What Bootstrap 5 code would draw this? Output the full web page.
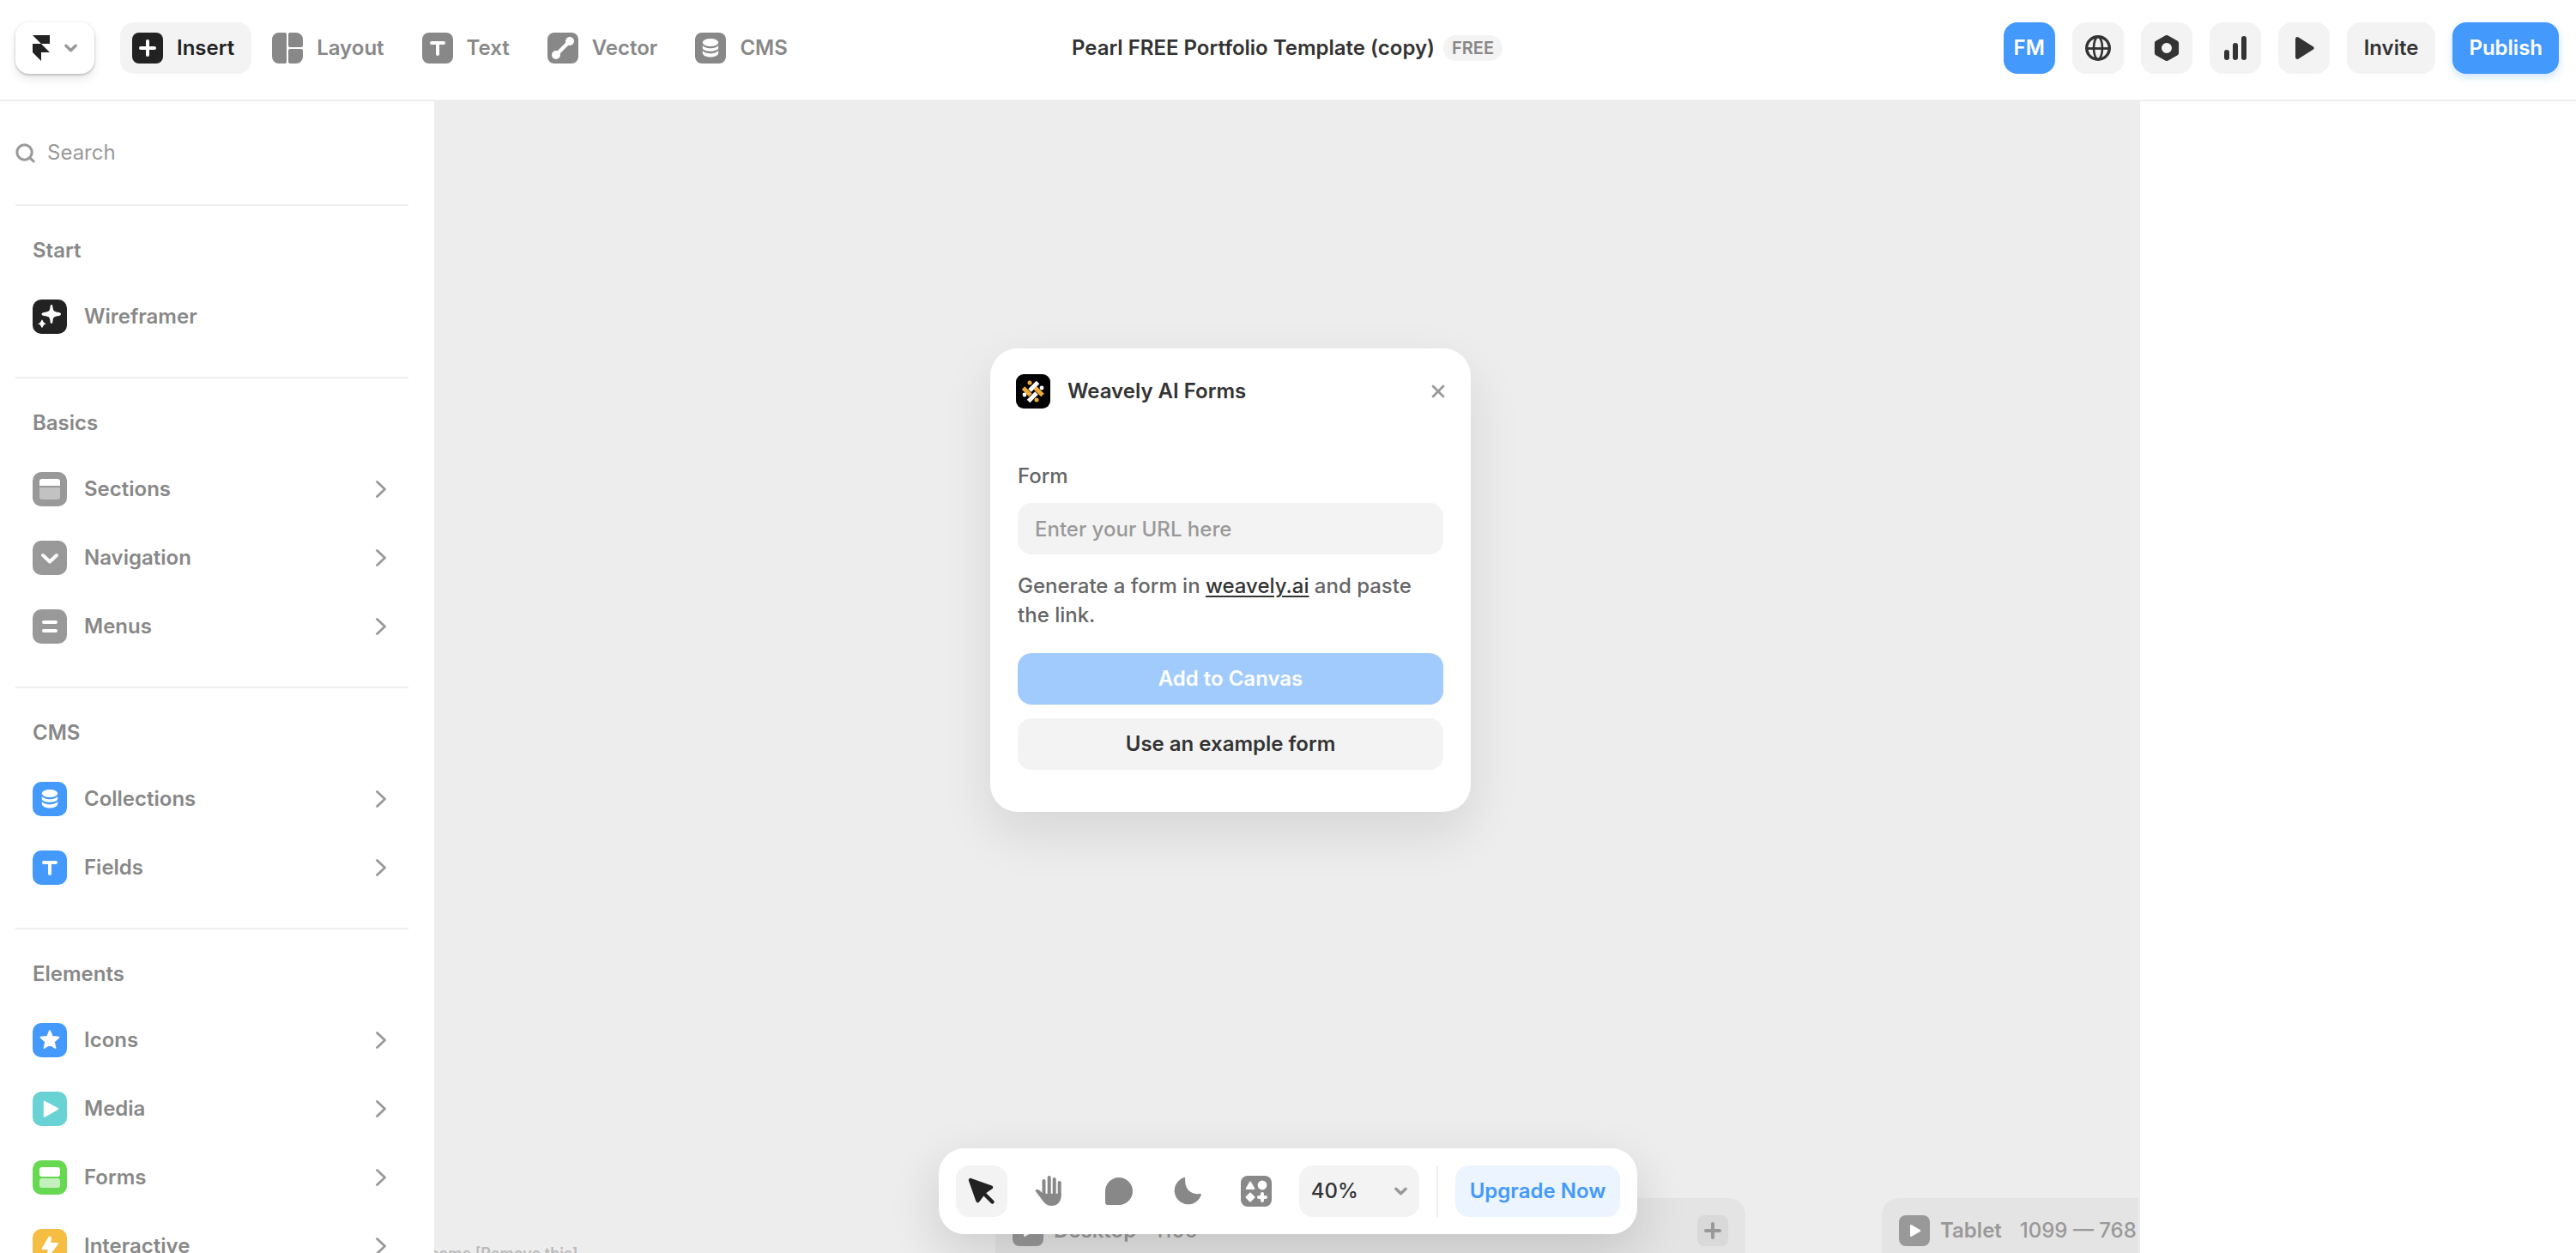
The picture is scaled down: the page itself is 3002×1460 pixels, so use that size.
<!DOCTYPE html>
<html lang="en">
<head>
<meta charset="utf-8">
<meta name="viewport" content="width=device-width, initial-scale=1">
<title>Pearl FREE Portfolio Template (copy)</title>
<link rel="stylesheet" href="https://cdn.jsdelivr.net/npm/bootstrap@5.3.0/dist/css/bootstrap.min.css">
<style>
  :root { --ink:#222; --text:#333; --mute:#888; --soft:#999; --line:#eee; --fill:#f3f3f3; --blue:#4499fc; }
  body { font-family: Inter, "Liberation Sans", sans-serif; font-size: 24px; line-height: 30px; font-weight: 500; color: var(--text); background: #fff; }
  svg { display: block; flex: none; }
  .btn { --bs-btn-font-size: 24px; --bs-btn-line-height: 30px; --bs-btn-font-weight: 600; --bs-btn-border-width: 0; --bs-btn-border-radius: 16px; --bs-btn-padding-x: 20px; --bs-btn-padding-y: 0px; --bs-btn-disabled-opacity: 1; height: 60px; }
  .btn-fill { --bs-btn-bg: var(--fill); --bs-btn-color: var(--text); --bs-btn-hover-bg: #eaeaea; }
  .btn-blue { --bs-btn-bg: var(--blue); --bs-btn-color: #fff; --bs-btn-hover-bg: #3388ee; --bs-btn-hover-color: #fff; --bs-btn-disabled-bg: #a1cbfd; --bs-btn-disabled-color: #fff; }
  .btn-tint { --bs-btn-bg: #ebf4ff; --bs-btn-color: var(--blue); }
  .btn-square { width: 60px; padding: 0; }

  .topbar { height: 118px; padding: 26px 20px 30px 18px; border-bottom: 2px solid var(--line); }
  .side-group { flex: 1 1 0; }
  .btn-logo { width: 92px; padding: 0 0 0 20px; gap: 17px; border-radius: 16px; box-shadow: 0 0 0 2px rgba(0,0,0,.02), 0 2px 3px rgba(0,0,0,.16), 0 6px 12px rgba(0,0,0,.09); color: var(--ink); }
  .tools { gap: 10px; margin-left: 30px; }
  .tool { --bs-btn-color: var(--mute); --bs-btn-padding-x: 14px; gap: 16px; padding-right: 20px; }
  .tool.active { --bs-btn-active-bg: var(--fill); --bs-btn-active-color: var(--ink); }
  .doc-title { font-size: 24px; line-height: 30px; font-weight: 600; }
  .doc-head { gap: 10px; }
  .tag-free { font-size: 20px; font-weight: 600; line-height: 30px; padding: 0 10px; color: var(--mute); background: var(--fill); }
  .actions { gap: 20px; }
  .btn-publish { --bs-btn-padding-x: 19px; box-shadow: 0 4px 10px rgba(68,153,252,.28); }

  .sidebar { width: 506px; padding: 0 30px 0 18px; }
  .search { height: 120px; gap: 14px; color: var(--soft); }
  .search input { border: 0; outline: 0; padding: 0; color: var(--text); background: none; }
  .search input::placeholder, .url-box::placeholder { color: var(--soft); opacity: 1; }
  .group { border-top: 2px solid var(--line); padding: 37px 20px 30px; }
  .group h2 { font-size: 24px; line-height: 30px; font-weight: 600; color: var(--mute); margin: 0 0 22px; }
  .entry { height: 80px; gap: 20px; font-weight: 600; color: var(--mute); text-decoration: none; }
  .entry .go { margin-left: auto; margin-right: 6px; color: var(--soft); }

  .canvas { background: #ededed; border-right: 2px solid #ededed; }
  .inspector { width: 508px; }
  .frame-label { position: absolute; left: -38px; top: 1331px; font-size: 18px; font-weight: 600; line-height: 24px; color: #bbb; white-space: nowrap; }
  .frame { position: absolute; top: 1278px; height: 200px; padding: 20px; gap: 12px; border-radius: 20px; background: #e4e4e4; line-height: 36px; font-weight: 600; color: var(--soft); white-space: nowrap; }
  .frame-desktop { left: 654px; width: 874px; }
  .frame-tablet { left: 1687px; width: 620px; }
  .frame .size { font-weight: 500; margin-left: 9px; }
  .frame .add { width: 36px; height: 36px; border: 0; padding: 0; border-radius: 8px; background: #d9d9d9; color: var(--soft); }

  .dialog-box { position: absolute; left: 648px; top: 288px; width: 560px; padding: 30px 32px 49px; border-radius: 32px; background: #fff; box-shadow: 0 24px 60px rgba(0,0,0,.1); }
  .dialog-head { gap: 20px; margin: 0 -2px 64px; height: 40px; font-weight: 600; }
  .dialog-head button { border: 0; background: none; padding: 0; color: var(--soft); }
  .copy { font-weight: 500; color: #666; }
  .url-box { height: 60px; border: 0; border-radius: 16px; padding: 0 20px; font-size: 24px; font-weight: 500; background: var(--fill); }
  .copy.help { line-height: 34px; margin: 20px 0 27px; }
  .help a { color: var(--text); text-underline-offset: 3px; text-decoration-thickness: 2px; }

  .dock-wrap { position: absolute; left: 0; right: 0; bottom: 22px; }
  .dock { gap: 20px; padding: 20px; border-radius: 30px; background: #fff; box-shadow: 0 20px 60px rgba(0,0,0,.14); }
  .dock .btn-square { color: var(--mute); }
  .zoom-box select { width: 140px; height: 60px; appearance: none; border: 0; border-radius: 16px; padding: 0 14px; background: var(--fill); color: var(--text); font-weight: 500; }
  .zoom-box svg { position: absolute; right: 14px; top: 25px; color: var(--soft); pointer-events: none; }
  .rule { width: 2px; height: 60px; background: var(--line); }
  .dock .btn-tint { --bs-btn-padding-x: 17px; }
</style>
</head>
<body class="vh-100 overflow-hidden d-flex flex-column position-relative">

<svg width="0" height="0" class="position-absolute" aria-hidden="true">
  <symbol id="chev" viewBox="0 0 16 10"><path d="M2 2l6 6 6-6" fill="none" stroke="currentColor" stroke-width="3.600" stroke-linecap="round" stroke-linejoin="round"/></symbol>
  <symbol id="go" viewBox="0 0 12 20"><path d="M1.500 1.500L10.500 10l-9 8.500" fill="none" stroke="currentColor" stroke-width="2.800" stroke-linecap="round" stroke-linejoin="round"/></symbol>
  <symbol id="plus" viewBox="0 0 36 36"><path d="M18 10v16M10 18h16" fill="none" stroke="currentColor" stroke-width="4" stroke-linecap="round"/></symbol>
  <symbol id="tee" viewBox="0 0 36 36"><path d="M11 12h14M18 12v13" fill="none" stroke="#fff" stroke-width="4" stroke-linecap="round"/></symbol>
  <symbol id="stack" viewBox="0 0 36 36" fill="#fff"><ellipse cx="18" cy="11.500" rx="9.200" ry="4.500"/><path d="M8.800 14.500c2 5 16.400 5 18.400 0v3.500c-1 5-17.400 5-18.400 0zM8.800 20.500c2 5 16.400 5 18.400 0v3.500c-1 6-17.400 6-18.400 0z"/></symbol>
  <symbol id="tri" viewBox="0 0 36 36"><path d="M13 12.200c0-1 .9-1.500 1.800-1l9.800 5.700c.9.500.9 1.600 0 2.100l-9.800 5.800c-.9.500-1.800 0-1.800-1z"/></symbol>
</svg>

<header class="topbar d-flex align-items-center bg-white">
  <div class="side-group d-flex align-items-center">
    <button class="btn btn-logo d-flex align-items-center bg-white" aria-label="Main menu">
      <svg width="20" height="30" viewBox="0 0 20 30" fill="currentColor"><path d="M0 0h20v10H10zM0 10h10l10 10H10v10L0 20z"/></svg>
      <svg width="15" height="10" color="#999"><use href="#chev"/></svg>
    </button>
    <nav class="tools d-flex" aria-label="Tools">
      <button class="btn tool active d-flex align-items-center">
        <svg width="36" height="36" color="#fff"><rect width="36" height="36" rx="8" fill="#222"/><use href="#plus"/></svg>Insert
      </button>
      <button class="btn tool d-flex align-items-center">
        <svg width="36" height="36" fill="#888"><path d="M8 0h7a2 2 0 0 1 2 2v32a2 2 0 0 1-2 2H8a8 8 0 0 1-8-8V8a8 8 0 0 1 8-8zM21 0h7a8 8 0 0 1 8 8v7a2 2 0 0 1-2 2H21a2 2 0 0 1-2-2V2a2 2 0 0 1 2-2zM21 19h13a2 2 0 0 1 2 2v7a8 8 0 0 1-8 8h-7a2 2 0 0 1-2-2V21a2 2 0 0 1 2-2z"/></svg>Layout
      </button>
      <button class="btn tool d-flex align-items-center">
        <svg width="36" height="36"><rect width="36" height="36" rx="8" fill="#888"/><use href="#tee"/></svg>Text
      </button>
      <button class="btn tool d-flex align-items-center">
        <svg width="36" height="36"><rect width="36" height="36" rx="8" fill="#888"/><path d="M10 26L26 10" stroke="#fff" stroke-width="4.500"/><circle cx="10" cy="26" r="5" fill="#fff"/><circle cx="26" cy="10" r="5" fill="#fff"/></svg>Vector
      </button>
      <button class="btn tool d-flex align-items-center">
        <svg width="36" height="36"><rect width="36" height="36" rx="8" fill="#888"/><use href="#stack"/></svg>CMS
      </button>
    </nav>
  </div>
  <div class="doc-head d-flex align-items-center">
    <h1 class="doc-title mb-0">Pearl FREE Portfolio Template (copy)</h1>
    <span class="tag-free rounded-pill">FREE</span>
  </div>
  <div class="side-group d-flex justify-content-end">
    <div class="actions d-flex">
      <button class="btn btn-blue btn-square">FM</button>
      <button class="btn btn-fill btn-square d-flex align-items-center justify-content-center" aria-label="Language">
        <svg width="30" height="30" viewBox="0 0 30 30" fill="none" stroke="currentColor"><circle cx="15" cy="15" r="13.300" stroke-width="3.400"/><ellipse cx="15" cy="15" rx="5" ry="13" stroke-width="2.600"/><path d="M2 15.500h26" stroke-width="2.800"/></svg>
      </button>
      <button class="btn btn-fill btn-square d-flex align-items-center justify-content-center" aria-label="Settings">
        <svg width="30" height="30" viewBox="0 0 30 30" fill="currentColor" fill-rule="evenodd"><path d="M13.200.5a3.600 3.600 0 0 1 3.600 0l10.500 6c1.200.7 1.800 1.800 1.800 3.100v10.800c0 1.300-.6 2.400-1.800 3.100l-10.500 6a3.600 3.600 0 0 1-3.600 0l-10.500-6C1.500 22.800.9 21.700.9 20.400V9.600c0-1.300.6-2.400 1.800-3.100zM15 9a6 6 0 1 0 0 12 6 6 0 0 0 0-12z"/></svg>
      </button>
      <button class="btn btn-fill btn-square d-flex align-items-center justify-content-center" aria-label="Analytics">
        <svg width="28" height="30" viewBox="0 0 28 30" fill="currentColor"><rect x="1" y="17" width="6" height="12" rx="3"/><rect x="11" y="9" width="6" height="20" rx="3"/><rect x="21" y="1" width="6" height="28" rx="3"/></svg>
      </button>
      <button class="btn btn-fill btn-square d-flex align-items-center justify-content-center" aria-label="Preview">
        <svg width="26" height="28" viewBox="0 0 26 28" fill="currentColor"><path d="M3 3.500C3 1.300 4.800.3 6.600 1.500l17 10.800c1.500 1 1.500 2.500 0 3.500l-17 10.700C4.800 27.700 3 26.700 3 24.500z"/></svg>
      </button>
      <button class="btn btn-fill">Invite</button>
      <button class="btn btn-blue btn-publish">Publish</button>
    </div>
  </div>
</header>

<main class="d-flex flex-grow-1 overflow-hidden">
  <aside class="sidebar flex-shrink-0 bg-white">
    <label class="search d-flex align-items-center">
      <svg width="23" height="23" viewBox="0 0 23 23" fill="none" stroke="currentColor" stroke-width="3"><circle cx="10.500" cy="10.500" r="8.700"/><path d="M16.800 16.800l4.400 4.200" stroke-linecap="round"/></svg>
      <input type="search" placeholder="Search" aria-label="Search">
    </label>
    <section class="group">
      <h2>Start</h2>
      <a class="entry d-flex align-items-center" href="#">
        <svg width="40" height="40" viewBox="0 0 40 40"><rect width="40" height="40" rx="10" fill="#222"/><path d="M22 6c1.100 0 1.300 1 1.500 3 .4 4 1.500 5 5.500 5.700 2.500.5 4 .7 4 2.300s-1.500 1.800-4 2.300c-4 .7-5.100 1.700-5.500 5.700-.2 2-.4 3-1.500 3s-1.300-1-1.500-3c-.4-4-1.500-5-5.500-5.700-2.500-.5-4.500-.7-4.500-2.300s2-1.800 4.500-2.300c4-.7 5.100-1.700 5.500-5.700.2-2 .4-3 1.500-3zM11 23.500c1 0 .8 4 5 4.800-4.200.8-4 4.700-5 4.700s-.8-3.900-5-4.700c4.200-.8 4-4.800 5-4.800z" fill="#fff"/></svg>Wireframer
      </a>
    </section>
    <section class="group">
      <h2>Basics</h2>
      <a class="entry d-flex align-items-center" href="#">
        <svg width="40" height="40"><rect width="40" height="40" rx="10" fill="#999"/><path d="M11 8h18a3 3 0 0 1 3 3v5H8v-5a3 3 0 0 1 3-3z" fill="#fff"/><path d="M8 18h24v11a3 3 0 0 1-3 3H11a3 3 0 0 1-3-3z" fill="#c2c2c2"/></svg>Sections
        <svg class="go" width="12" height="20"><use href="#go"/></svg>
      </a>
      <a class="entry d-flex align-items-center" href="#">
        <svg width="40" height="40"><rect width="40" height="40" rx="10" fill="#999"/><path d="M12 17l8 7.500 8-7.500" fill="none" stroke="#fff" stroke-width="4" stroke-linecap="round" stroke-linejoin="round"/></svg>Navigation
        <svg class="go" width="12" height="20"><use href="#go"/></svg>
      </a>
      <a class="entry d-flex align-items-center" href="#">
        <svg width="40" height="40"><rect width="40" height="40" rx="10" fill="#999"/><path d="M13 15h14M13 25h14" stroke="#fff" stroke-width="4" stroke-linecap="round"/></svg>Menus
        <svg class="go" width="12" height="20"><use href="#go"/></svg>
      </a>
    </section>
    <section class="group">
      <h2>CMS</h2>
      <a class="entry d-flex align-items-center" href="#">
        <svg width="40" height="40" viewBox="0 0 40 40"><rect width="40" height="40" rx="10" fill="#4499fc"/><use href="#stack" x="2" y="2" width="36" height="36"/></svg>Collections
        <svg class="go" width="12" height="20"><use href="#go"/></svg>
      </a>
      <a class="entry d-flex align-items-center" href="#">
        <svg width="40" height="40" viewBox="0 0 40 40"><rect width="40" height="40" rx="10" fill="#4499fc"/><use href="#tee" x="2" y="2" width="36" height="36"/></svg>Fields
        <svg class="go" width="12" height="20"><use href="#go"/></svg>
      </a>
    </section>
    <section class="group">
      <h2>Elements</h2>
      <a class="entry d-flex align-items-center" href="#">
        <svg width="40" height="40"><rect width="40" height="40" rx="10" fill="#4499fc"/><path d="M20 9l3 7 7.500.700-5.700 5 1.700 7.300-6.500-3.900-6.500 3.900 1.700-7.300-5.700-5 7.500-.7z" fill="#fff" stroke="#fff" stroke-width="1.800" stroke-linejoin="round"/></svg>Icons
        <svg class="go" width="12" height="20"><use href="#go"/></svg>
      </a>
      <a class="entry d-flex align-items-center" href="#">
        <svg width="40" height="40"><rect width="40" height="40" rx="10" fill="#69d2d4"/><path d="M14 12l15 8-15 8.500z" fill="#fff" stroke="#fff" stroke-width="2.500" stroke-linejoin="round"/></svg>Media
        <svg class="go" width="12" height="20"><use href="#go"/></svg>
      </a>
      <a class="entry d-flex align-items-center" href="#">
        <svg width="40" height="40"><rect width="40" height="40" rx="10" fill="#66d852"/><rect x="8" y="8" width="24" height="11" rx="3" fill="#fff"/><rect x="8" y="21" width="24" height="11" rx="3" fill="#c4f0bd"/></svg>Forms
        <svg class="go" width="12" height="20"><use href="#go"/></svg>
      </a>
      <a class="entry d-flex align-items-center" href="#">
        <svg width="40" height="40"><rect width="40" height="40" rx="10" fill="#f5bd41"/><path d="M19.500 9.500L11.500 23h7l-.5 9L29 17h-8.500l.5-7z" fill="#fff" stroke="#fff" stroke-width="2" stroke-linejoin="round"/></svg>Interactive
        <svg class="go" width="12" height="20"><use href="#go"/></svg>
      </a>
    </section>
  </aside>

  <div class="canvas flex-grow-1 position-relative overflow-hidden">
    <div class="frame-label">Welcome [Remove this]</div>
    <div class="frame frame-desktop d-flex align-items-start">
      <svg width="36" height="36" fill="#fff"><rect width="36" height="36" rx="8" fill="#999"/><use href="#tri"/></svg>
      <span>Desktop</span><span class="size">1100</span>
      <button class="add ms-auto" aria-label="Add breakpoint"><svg width="36" height="36"><use href="#plus"/></svg></button>
    </div>
    <div class="frame frame-tablet d-flex align-items-start">
      <svg width="36" height="36" fill="#fff"><rect width="36" height="36" rx="8" fill="#999"/><use href="#tri"/></svg>
      <span>Tablet</span><span class="size">1099 — 768</span>
    </div>

    <section class="dialog-box" role="dialog" aria-labelledby="dlg-title">
      <div class="dialog-head d-flex align-items-center">
        <svg width="40" height="40" viewBox="0 0 40 40" stroke-width="5"><rect width="40" height="40" rx="9"/><path d="M8.500 16l8.500 8.500M22.500 16l8.500 8.500" stroke="#f2a93b"/><path d="M25.500 9.500L16 19M24 22L14.500 31.500" stroke="#fff"/><g stroke="none"><circle cx="16" cy="10" r="2.500" fill="#f2a93b"/><circle cx="24" cy="30" r="2.500" fill="#f2a93b"/><circle cx="30" cy="16" r="2.400" fill="#fff"/><circle cx="10" cy="24" r="2.400" fill="#fff"/></g></svg>
        <span id="dlg-title">Weavely AI Forms</span>
        <button class="ms-auto" aria-label="Close"><svg width="16" height="16"><path d="M2 2l12 12M14 2L2 14" stroke="currentColor" stroke-width="2.800" stroke-linecap="round"/></svg></button>
      </div>
      <label class="copy d-block mb-3" for="url">Form</label>
      <input id="url" class="url-box d-block w-100" type="url" placeholder="Enter your URL here">
      <p class="copy help">Generate a form in <a href="#">weavely.ai</a> and paste the link.</p>
      <div class="d-grid gap-3">
        <button class="btn btn-blue" disabled>Add to Canvas</button>
        <button class="btn btn-fill">Use an example form</button>
      </div>
    </section>
  </div>

  <aside class="inspector flex-shrink-0 bg-white" aria-label="Properties"></aside>
</main>

<div class="dock-wrap d-flex justify-content-center">
  <div class="dock d-flex align-items-center" role="toolbar" aria-label="Canvas tools">
    <button class="btn btn-fill btn-square" aria-label="Select"><svg width="60" height="60" color="#222"><path d="M17 17l24 8.500-8 5.500-7.500 10z" fill="currentColor" stroke="currentColor" stroke-width="4.500" stroke-linejoin="round"/><path d="M33 33l9.500 9.500" stroke="currentColor" stroke-width="4.500" stroke-linecap="round"/></svg></button>
    <button class="btn btn-square" aria-label="Pan"><svg width="60" height="60" fill="none" stroke="currentColor" stroke-width="4" stroke-linecap="round"><path d="M22.500 18v16M28.700 14v18M34.700 16v16M40.700 20v14"/><path d="M12.500 29.500c1.500-2.600 4-1.600 5.500 0l3.500 3.300H42.700V35c0 7.500-4.700 12-11.200 12-5.500 0-8.700-3.500-11.500-7.500z" fill="currentColor" stroke="none"/></svg></button>
    <button class="btn btn-square" aria-label="Comment"><svg width="60" height="60" fill="currentColor"><path d="M14 30a16 16 0 1 1 16 16H17a3 3 0 0 1-3-3z"/></svg></button>
    <button class="btn btn-square" aria-label="Dark mode"><svg width="60" height="60" fill="currentColor"><path d="M27.200 15.200c.1-.9-.5-1.400-1.400-1.100A16 16 0 1 0 45.800 34.500c.3-.9-.3-1.600-1.200-1.400C33.500 34.200 26 27 27.200 15.200z"/></svg></button>
    <button class="btn btn-square d-flex align-items-center justify-content-center" aria-label="Components"><svg width="36" height="36"><rect width="36" height="36" rx="8" fill="#888"/><g fill="#fff" stroke="#fff" stroke-linejoin="round" stroke-linecap="round"><path d="M11 7.500l4.300 7.500H6.700z" stroke-width="2"/><circle cx="25" cy="11" r="5.400" stroke="none"/><path d="M11 20.500l4.500 4.500-4.500 4.500L6.500 25z" stroke-width="2"/><path d="M25 21v8M21 25h8" stroke-width="4"/></g></svg></button>
    <div class="zoom-box position-relative">
      <select aria-label="Zoom"><option>40%</option><option>100%</option></select>
      <svg width="15" height="10"><use href="#chev"/></svg>
    </div>
    <div class="rule"></div>
    <button class="btn btn-tint">Upgrade Now</button>
  </div>
</div>

<script src="https://cdn.jsdelivr.net/npm/bootstrap@5.3.0/dist/js/bootstrap.bundle.min.js"></script>
</body>
</html>
